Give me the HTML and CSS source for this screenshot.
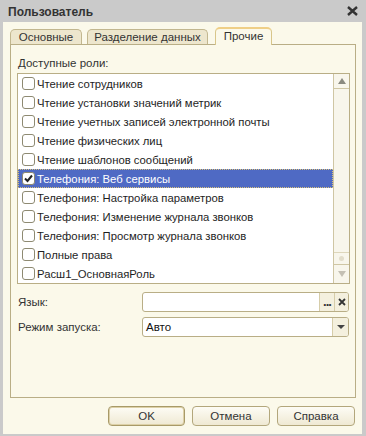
FILE: index.html
```html
<!DOCTYPE html>
<html lang="ru">
<head>
  <meta charset="UTF-8" />
  <title>Пользователь</title>
  <link rel="stylesheet" href="styles.css">
</head>
<body>
  <div class="window">
    <div class="titlebar">
      <span class="title">Пользователь</span>
      <svg class="close" width="11" height="10" viewBox="0 0 11 10">
        <path d="M1 1 L10 9 M10 1 L1 9" stroke="#333" stroke-width="2.4" fill="none"/>
      </svg>
    </div>

    <div class="client">
      <div class="tabs">
        <div class="tab tab1">Основные</div>
        <div class="tab tab2">Разделение данных</div>
        <div class="tab tab3 active">Прочие</div>
      </div>

      <div class="panel">
        <div class="caption">Доступные роли:</div>

        <div class="list">
          <div class="rows">
            <div class="row"><span class="check"></span>Чтение сотрудников</div>
            <div class="row"><span class="check"></span>Чтение установки значений метрик</div>
            <div class="row"><span class="check"></span>Чтение учетных записей электронной почты</div>
            <div class="row"><span class="check"></span>Чтение физических лиц</div>
            <div class="row"><span class="check"></span>Чтение шаблонов сообщений</div>
            <div class="row selected">
              <span class="check checked">
                <svg width="11" height="11" viewBox="0 0 11 11"><path d="M2 5.5 L4.5 8 L9 2.5" stroke="#222" stroke-width="2" fill="none"/></svg>
              </span>Телефония: Веб сервисы
            </div>
            <div class="row"><span class="check"></span>Телефония: Настройка параметров</div>
            <div class="row"><span class="check"></span>Телефония: Изменение журнала звонков</div>
            <div class="row"><span class="check"></span>Телефония: Просмотр журнала звонков</div>
            <div class="row"><span class="check"></span>Полные права</div>
            <div class="row"><span class="check"></span>Расш1_ОсновнаяРоль</div>
          </div>
          <div class="scrollbar">
            <div class="sb-btn sb-up"><span class="arrow-up"></span></div>
            <div class="sb-track"></div>
            <div class="sb-thumb"><span class="dot"></span></div>
            <div class="sb-btn sb-down"><span class="arrow-down"></span></div>
          </div>
        </div>

        <div class="field-row first">
          <span class="field-label">Язык:</span>
          <div class="input">
            <span class="input-text"></span>
            <span class="input-btn dots">...</span>
            <span class="input-btn clear">
              <svg width="8" height="8" viewBox="0 0 8 8"><path d="M1 1 L7 7 M7 1 L1 7" stroke="#333" stroke-width="1.8" fill="none"/></svg>
            </span>
          </div>
        </div>

        <div class="field-row">
          <span class="field-label">Режим запуска:</span>
          <div class="input">
            <span class="input-text">Авто</span>
            <span class="input-btn drop"><span class="arrow-drop"></span></span>
          </div>
        </div>
      </div>

      <div class="buttons">
        <button class="btn default">OK</button>
        <button class="btn">Отмена</button>
        <button class="btn">Справка</button>
      </div>
    </div>
  </div>
</body>
</html>
```

FILE: styles.css
```css
* {
  margin: 0;
  padding: 0;
  box-sizing: border-box;
}

html, body {
  width: 366px;
  height: 436px;
  overflow: hidden;
  font-family: "Liberation Sans", Arial, sans-serif;
  font-size: 11px;
  color: #333;
  background: #c9c9c9;
}

.window {
  width: 366px;
  height: 436px;
  display: flex;
  flex-direction: column;
  background: #cacaca;
  padding: 0 4px 2px 3px;
}

.titlebar {
  height: 22px;
  display: flex;
  align-items: center;
  justify-content: space-between;
  padding: 2px 4px 0 5px;
}

.title {
  font-weight: bold;
  font-size: 12px;
  color: #333;
}

.close {
  margin-top: -2px;
}

.client {
  flex: 1;
  background: #fbf9ea;
  padding: 5px 6px 0 7px;
}

/* tabs */
.tabs {
  display: flex;
  align-items: flex-end;
  height: 17px;
}

.tab {
  height: 15px;
  border: 1px solid #c2b78f;
  border-bottom: none;
  border-radius: 5px 5px 0 0;
  background: #ede6cd;
  text-align: center;
  line-height: 14px;
  font-size: 11.5px;
  color: #333;
}

.tab1 { width: 72px; }
.tab2 { width: 121px; margin-left: 5px; }
.tab3 { width: 57px; margin-left: 7px; }

.tab.active {
  height: 18px;
  margin-bottom: -1px;
  background: #fbf9ea;
  border-color: #d8c68a;
  border-top: 2px solid #efcf86;
  line-height: 15px;
  position: relative;
  z-index: 1;
}

.panel {
  height: 354px;
  border: 1px solid #b9ae86;
  padding: 10px 5px 0 6px;
}

.caption {
  line-height: 16px;
  padding-left: 1px;
  font-size: 11.5px;
}

/* list */
.list {
  margin-top: 2px;
  height: 211px;
  border: 1px solid #b9ae86;
  background: #fff;
  display: flex;
}

.rows {
  flex: 1;
}

.row {
  height: 19px;
  display: flex;
  align-items: center;
  padding-left: 4px;
  font-size: 11.3px;
  color: #1e1e1e;
  white-space: nowrap;
  overflow: hidden;
}

.row.selected {
  background: #4f6ac4;
  color: #fff;
  outline: 1px dotted #d9c27a;
  outline-offset: -1px;
}

.check {
  width: 13px;
  height: 13px;
  border: 1px solid #8e8a72;
  border-radius: 3px;
  background: #fff;
  margin-right: 2px;
  flex-shrink: 0;
  display: flex;
  align-items: center;
  justify-content: center;
}

.scrollbar {
  width: 16px;
  border-left: 1px solid #cfc6a4;
  background: #f8f6ec;
  display: flex;
  flex-direction: column;
}

.sb-btn {
  display: flex;
  align-items: center;
  justify-content: center;
}

.sb-up {
  height: 15px;
  border-bottom: 1px solid #cfc6a4;
}

.sb-track {
  flex: 1;
}

.sb-thumb {
  height: 12px;
  border-top: 1px solid #ddd6bb;
  display: flex;
  align-items: center;
  justify-content: center;
}

.dot {
  width: 5px;
  height: 5px;
  border-radius: 50%;
  background: #e2ddcb;
}

.sb-down {
  height: 19px;
  border-top: 1px solid #cfc6a4;
}

.arrow-up {
  width: 0;
  height: 0;
  border-left: 4px solid transparent;
  border-right: 4px solid transparent;
  border-bottom: 6px solid #8a8a80;
}

.arrow-down {
  width: 0;
  height: 0;
  border-left: 4px solid transparent;
  border-right: 4px solid transparent;
  border-top: 6px solid #c4c0b4;
}

/* fields */
.field-row {
  display: flex;
  align-items: center;
  margin-top: 5px;
  padding-left: 1px;
  font-size: 11.5px;
}

.field-row.first {
  margin-top: 8px;
}

.field-label {
  width: 124px;
  color: #333;
}

.input {
  flex: 1;
  height: 20px;
  margin-right: 1px;
  border: 1px solid #b9ae86;
  border-radius: 3px;
  background: #fff;
  display: flex;
}

.input-text {
  flex: 1;
  padding-left: 3px;
  line-height: 18px;
  color: #111;
}

.input-btn {
  width: 14px;
  display: flex;
  align-items: center;
  justify-content: center;
  background: #f4f0de;
  border-left: 1px solid #d6cda9;
}

.dots {
  width: 15px;
  font-size: 13px;
  font-weight: bold;
  line-height: 12px;
  align-items: flex-end;
  padding-bottom: 3px;
  color: #333;
  letter-spacing: -1px;
}

.drop {
  width: 16px;
  border-radius: 0 2px 2px 0;
}

.clear {
  border-radius: 0 2px 2px 0;
}

.arrow-drop {
  width: 0;
  height: 0;
  border-left: 4px solid transparent;
  border-right: 4px solid transparent;
  border-top: 4px solid #444;
}

/* buttons */
.buttons {
  display: flex;
  justify-content: flex-end;
  gap: 7px;
  margin-top: 8px;
  padding-right: 1px;
}

.btn {
  width: 78px;
  height: 20px;
  font-family: "Liberation Sans", Arial, sans-serif;
  font-size: 11.5px;
  color: #333;
  border: 1px solid #b3a77c;
  border-radius: 4px;
  background: linear-gradient(to bottom, #fdfcf5, #efe9d3);
}

.btn.default {
  width: 77px;
  border-color: #a89a68;
  box-shadow: inset 0 0 0 1px #ddd1a8;
}
```
